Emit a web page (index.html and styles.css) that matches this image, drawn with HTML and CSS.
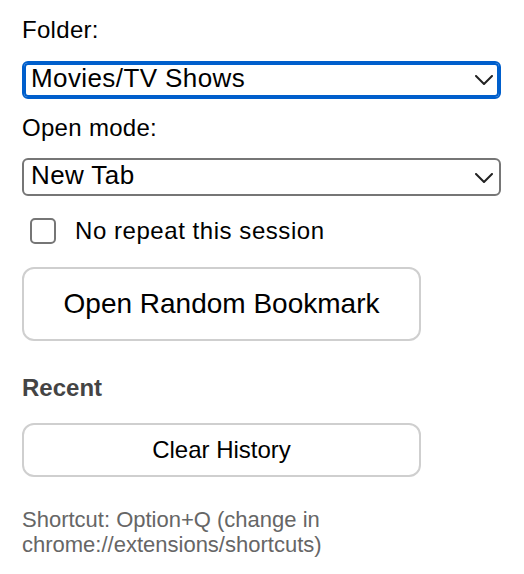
FILE: index.html
```html
<!DOCTYPE html>
<html lang="en">
<head>
<meta charset="utf-8">
<title>Random Bookmark</title>
<link rel="stylesheet" href="styles.css">
</head>
<body>
<main class="popup">
  <label class="field-label">Folder:</label>
  <div class="select select--focused">
    <span class="select__value">Movies/TV Shows</span>
    <svg class="chevron" width="18" height="10" viewBox="0 0 18 10"><polyline points="1,1 9,9 17,1" fill="none" stroke="#222" stroke-width="2" stroke-linecap="round" stroke-linejoin="round"/></svg>
  </div>
  <label class="field-label">Open mode:</label>
  <div class="select">
    <span class="select__value">New Tab</span>
    <svg class="chevron" width="18" height="10" viewBox="0 0 18 10"><polyline points="1,1 9,9 17,1" fill="none" stroke="#222" stroke-width="2" stroke-linecap="round" stroke-linejoin="round"/></svg>
  </div>
  <label class="check-row">
    <span class="checkbox"></span>
    <span class="check-row__text">No repeat this session</span>
  </label>
  <button class="btn btn--primary">Open Random Bookmark</button>
  <h2 class="section-title">Recent</h2>
  <button class="btn btn--secondary">Clear History</button>
  <p class="hint">Shortcut: Option+Q (change in chrome://extensions/shortcuts)</p>
</main>
</body>
</html>
```
FILE: styles.css
```css
* { box-sizing: border-box; }

html, body {
  margin: 0;
  padding: 0;
  background: #fff;
}

body {
  font-family: "Liberation Sans", Arial, sans-serif;
  color: #000;
}

.popup {
  display: flex;
  flex-direction: column;
  align-items: stretch;
  padding: 16px 23px 0 22px;
}

.field-label {
  font-size: 24px;
  line-height: 28px;
  letter-spacing: 0.3px;
  margin-bottom: 16.5px;
}

.select {
  display: flex;
  align-items: center;
  justify-content: space-between;
  height: 38px;
  border: 2px solid #767676;
  border-radius: 6px;
  padding: 0 6px 0 7px;
  margin-bottom: 15px;
  background: #fff;
}

.select--focused {
  border-color: #005fcc;
  box-shadow: inset 0 0 0 2px #005fcc;
}

.select__value {
  font-size: 26px;
  line-height: 30px;
  padding-bottom: 4px;
  letter-spacing: 0.4px;
}

.chevron {
  flex: none;
  margin-top: 1px;
}

.check-row {
  display: flex;
  align-items: center;
  gap: 19px;
  margin-top: 6px;
  height: 28px;
  padding-left: 8px;
}

.checkbox {
  width: 26px;
  height: 26px;
  border: 2px solid #767676;
  border-radius: 5px;
  background: #fff;
  flex: none;
}

.check-row__text {
  font-size: 24px;
  line-height: 28px;
  letter-spacing: 0.55px;
}

.btn {
  display: flex;
  align-items: center;
  justify-content: center;
  width: 399px;
  background: #fff;
  border: 2px solid #cfcfcf;
  border-radius: 12px;
  font-family: "Liberation Sans", Arial, sans-serif;
  color: #000;
  padding: 0;
}

.btn--primary {
  margin-top: 22px;
  height: 74px;
  font-size: 28px;
}

.btn--secondary {
  margin-top: 21px;
  height: 54px;
  font-size: 24px;
}

.section-title {
  margin: 33px 0 0;
  font-size: 24px;
  line-height: 28px;
  font-weight: 700;
  color: #444;
}

.hint {
  margin: 30px 0 0;
  font-size: 22px;
  line-height: 25px;
  color: #666;
}
```
